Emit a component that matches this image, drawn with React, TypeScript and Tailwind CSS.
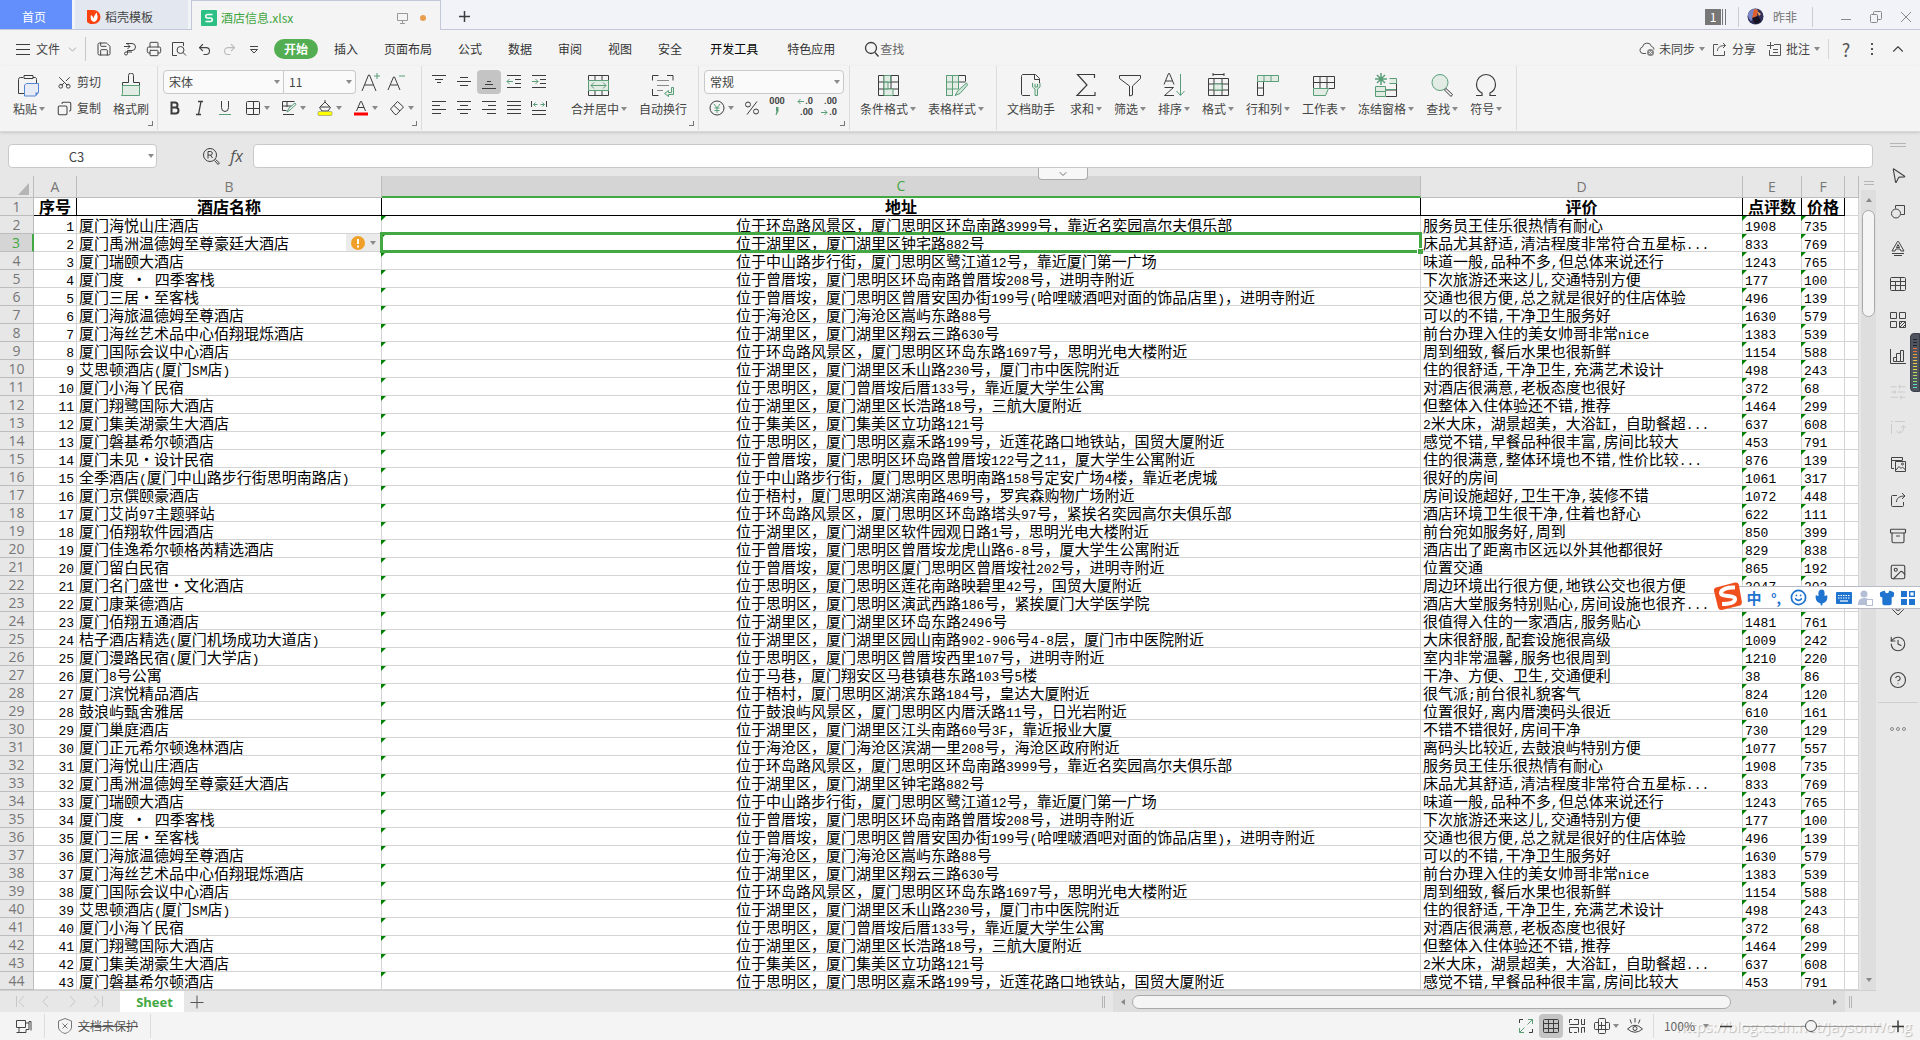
import React from 'react';
import {
  Archive,
  ChevronDown,
  ChevronUp,
  CircleHelp,
  Copy,
  History,
  Image,
  Mic,
  MousePointer2,
  Printer,
  Redo2,
  Save,
  Scissors,
  Shirt,
  SlidersHorizontal,
  Smile,
  Undo2,
} from 'lucide-react';

type Hotel = [name: string, address: string, review: string, count: string, price: string];

const hotels: Hotel[] = [
  ['厦门海悦山庄酒店', '位于环岛路风景区，厦门思明区环岛南路3999号，靠近名奕园高尔夫俱乐部', '服务员王佳乐很热情有耐心', '1908', '735'],
  ['厦门禹洲温德姆至尊豪廷大酒店', '位于湖里区，厦门湖里区钟宅路882号', '床品尤其舒适,清洁程度非常符合五星标...', '833', '769'],
  ['厦门瑞颐大酒店', '位于中山路步行街，厦门思明区鹭江道12号，靠近厦门第一广场', '味道一般,品种不多,但总体来说还行', '1243', '765'],
  ['厦门度 · 四季客栈', '位于曾厝垵，厦门思明区环岛南路曾厝垵208号，进明寺附近', '下次旅游还来这儿,交通特别方便', '177', '100'],
  ['厦门三居·至客栈', '位于曾厝垵，厦门思明区曾厝安国办街199号(哈哩啵酒吧对面的饰品店里)，进明寺附近', '交通也很方便,总之就是很好的住店体验', '496', '139'],
  ['厦门海旅温德姆至尊酒店', '位于海沧区，厦门海沧区嵩屿东路88号', '可以的不错,干净卫生服务好', '1630', '579'],
  ['厦门海丝艺术品中心佰翔琨烁酒店', '位于湖里区，厦门湖里区翔云三路630号', '前台办理入住的美女帅哥非常nice', '1383', '539'],
  ['厦门国际会议中心酒店', '位于环岛路风景区，厦门思明区环岛东路1697号，思明光电大楼附近', '周到细致,餐后水果也很新鲜', '1154', '588'],
  ['艾思顿酒店(厦门SM店)', '位于湖里区，厦门湖里区禾山路230号，厦门市中医院附近', '住的很舒适,干净卫生,充满艺术设计', '498', '243'],
  ['厦门小海丫民宿', '位于思明区，厦门曾厝垵后厝133号，靠近厦大学生公寓', '对酒店很满意,老板态度也很好', '372', '68'],
  ['厦门翔鹭国际大酒店', '位于湖里区，厦门湖里区长浩路18号，三航大厦附近', '但整体入住体验还不错,推荐', '1464', '299'],
  ['厦门集美湖豪生大酒店', '位于集美区，厦门集美区立功路121号', '2米大床，湖景超美，大浴缸，自助餐超...', '637', '608'],
  ['厦门磐基希尔顿酒店', '位于思明区，厦门思明区嘉禾路199号，近莲花路口地铁站，国贸大厦附近', '感觉不错,早餐品种很丰富,房间比较大', '453', '791'],
  ['厦门未见·设计民宿', '位于曾厝垵，厦门思明区环岛路曾厝垵122号之11，厦大学生公寓附近', '住的很满意,整体环境也不错,性价比较...', '876', '139'],
  ['全季酒店(厦门中山路步行街思明南路店)', '位于中山路步行街，厦门思明区思明南路158号定安广场4楼，靠近老虎城', '很好的房间', '1061', '317'],
  ['厦门京僎颐豪酒店', '位于梧村，厦门思明区湖滨南路469号，罗宾森购物广场附近', '房间设施超好,卫生干净,装修不错', '1072', '448'],
  ['厦门艾尚97主题驿站', '位于环岛路风景区，厦门思明区环岛路塔头97号，紧挨名奕园高尔夫俱乐部', '酒店环境卫生很干净,住着也舒心', '622', '111'],
  ['厦门佰翔软件园酒店', '位于湖里区，厦门湖里区软件园观日路1号，思明光电大楼附近', '前台宛如服务好,周到', '850', '399'],
  ['厦门佳逸希尔顿格芮精选酒店', '位于曾厝垵，厦门思明区曾厝垵龙虎山路6-8号，厦大学生公寓附近', '酒店出了距离市区远以外其他都很好', '829', '838'],
  ['厦门留白民宿', '位于曾厝垵，厦门思明区厦门思明区曾厝垵社202号，进明寺附近', '位置交通', '865', '192'],
  ['厦门名门盛世·文化酒店', '位于思明区，厦门思明区莲花南路映碧里42号，国贸大厦附近', '周边环境出行很方便,地铁公交也很方便', '3047', '203'],
  ['厦门康莱德酒店', '位于思明区，厦门思明区演武西路186号，紧挨厦门大学医学院', '酒店大堂服务特别贴心,房间设施也很齐...', '3106', '1083'],
  ['厦门佰翔五通酒店', '位于湖里区，厦门湖里区环岛东路2496号', '很值得入住的一家酒店,服务贴心', '1481', '761'],
  ['桔子酒店精选(厦门机场成功大道店)', '位于湖里区，厦门湖里区园山南路902-906号4-8层，厦门市中医院附近', '大床很舒服,配套设施很高级', '1009', '242'],
  ['厦门漫路民宿(厦门大学店)', '位于思明区，厦门思明区曾厝垵西里107号，进明寺附近', '室内非常温馨,服务也很周到', '1210', '220'],
  ['厦门8号公寓', '位于马巷，厦门翔安区马巷镇巷东路103号5楼', '干净、方便、卫生,交通便利', '38', '86'],
  ['厦门滨悦精品酒店', '位于梧村，厦门思明区湖滨东路184号，皇达大厦附近', '很气派;前台很礼貌客气', '824', '120'],
  ['鼓浪屿甄舍雅居', '位于鼓浪屿风景区，厦门思明区内厝沃路11号，日光岩附近', '位置很好,离内厝澳码头很近', '610', '161'],
  ['厦门巢庭酒店', '位于湖里区，厦门湖里区江头南路60号3F，靠近报业大厦', '不错不错很好,房间干净', '730', '129'],
  ['厦门正元希尔顿逸林酒店', '位于海沧区，厦门海沧区滨湖一里208号，海沧区政府附近', '离码头比较近,去鼓浪屿特别方便', '1077', '557'],
];

// the crawler wrote the list twice, the second pass is cut at the window edge
const rows = Array.from({ length: 43 }, (_, i) => hotels[i % hotels.length]);

// half width characters are set in a mono face, full width ones in the CJK face
function Mixed({ text }: { text: string }) {
  return (
    <>
      {text.split(/([\x20-\x7e]+|·)/).map((part, i) => {
        if (part === '·') return <span key={i} className="inline-block w-[15px] text-center">·</span>;
        if (i % 2 === 1) return <span key={i} className="font-['Liberation_Mono',monospace] text-[13px]">{part}</span>;
        return part;
      })}
    </>
  );
}

function Caret() {
  return <span className="h-0 w-0 shrink-0 border-x-[3px] border-t-4 border-x-transparent border-t-[#8a8a8a]" />;
}

function Svg({ size = 16, children }: { size?: number; children: React.ReactNode }) {
  return (
    <svg width={size} height={size} viewBox={`0 0 ${size} ${size}`} fill="none" stroke="#3c3c3c" aria-hidden="true">
      {children}
    </svg>
  );
}

const GREEN = '#5a9e78';
const PALE = '#e3ebe5';

function BigButton({ label, caret, children }: { label: string; caret?: boolean; children: React.ReactNode }) {
  return (
    <button className="flex shrink-0 flex-col items-center pt-[7px]">
      <Svg size={24}>{children}</Svg>
      <span className="flex h-6 items-center gap-[2px] whitespace-nowrap">
        {label}
        {caret && <Caret />}
      </span>
    </button>
  );
}

function Tool({ label, active, children }: { label: string; active?: boolean; children: React.ReactNode }) {
  return (
    <button
      aria-label={label}
      className={active ? 'flex h-6 w-6 items-center justify-center rounded bg-[#c4c4c4]' : 'flex h-6 w-6 items-center justify-center'}
    >
      {children}
    </button>
  );
}

function DropTool({ label, children }: { label: string; children: React.ReactNode }) {
  return (
    <button aria-label={label} className="flex h-6 items-center gap-[3px]">
      {children}
      <Caret />
    </button>
  );
}

function Group({ className, corner, children }: { className: string; corner?: boolean; children: React.ReactNode }) {
  return (
    <div className={`relative flex h-16 shrink-0 border-r border-[#dcdcdc] ${className}`}>
      {children}
      {corner && <span className="absolute right-1 bottom-1 h-[5px] w-[5px] border-r border-b border-[#777]" />}
    </div>
  );
}

function Picker({ label, options, className }: { label: string; options: string[]; className: string }) {
  return (
    <div className={`relative h-6 border-[#c9c9c9] bg-[#fafafa] ${className}`}>
      <select aria-label={label} className="h-full w-full appearance-none bg-transparent pl-[5px] outline-none">
        {options.map((o) => (
          <option key={o}>{o}</option>
        ))}
      </select>
      <span className="pointer-events-none absolute inset-y-0 right-[3px] flex items-center">
        <Caret />
      </span>
    </div>
  );
}

function TitleBar() {
  return (
    <div className="flex h-[30px] shrink-0 bg-[#f1f3f8]">
      <button className="w-[72px] border-b border-[#c3c8d8] bg-[#628ffc] pt-1 pr-1 text-white">首页</button>
      <div className="w-[3px] border-b border-[#c3c8d8]" />
      <button className="flex w-[113px] items-center gap-1 border-b border-[#c3c8d8] bg-[#e3e7f0] pt-1 pl-3">
        <svg width="14" height="16" viewBox="0 0 14 16" aria-hidden="true">
          <path d="M0 1h6.500a7 7 0 0 1 0 14H3L0 13z" fill="#fb4310" />
          <path d="M7 13C4 12 3 9 4 6c1.500 1 2.200 2 2.500 3.500C7 7 8 5 10 3.500 9.500 5 11 6.500 10.500 9 10 11.500 8.500 12.500 7 13z" fill="#fff" />
        </svg>
        稻壳模板
      </button>
      <div className="w-[3px] border-b border-[#c3c8d8]" />
      <div className="flex w-[250px] items-center gap-1 border-x border-t border-[#c3c8d8] bg-[#f4f4f4] pt-1 pr-[14px] pl-[9px]">
        <svg width="16" height="16" viewBox="0 0 16 16" fill="none" aria-hidden="true">
          <rect width="16" height="16" rx="1" fill="#2cc084" />
          <path d="M11.500 4.500h-5a1.500 1.500 0 0 0 0 3.500h3a1.700 1.700 0 0 1 0 3.500h-5" stroke="#fff" strokeWidth="1.500" />
        </svg>
        <span className="flex-1 text-[#3ea53e]">酒店信息.xlsx</span>
        <svg width="11" height="12" viewBox="0 0 11 12" fill="none" stroke="#999" aria-hidden="true">
          <path d="M.5 1.500h10v7H.5zM5.500 8.500v3M3 11.500h5" />
        </svg>
        <span className="ml-2 h-[6px] w-[6px] rounded-full bg-[#e8a050]" />
      </div>
      <div className="flex flex-1 items-center border-b border-[#c3c8d8] pt-1 pl-[17px]">
        <button aria-label="新建标签">
          <Svg size={13}>
            <path d="M6.500 1v11M1 6.500h11" strokeWidth="1.500" />
          </Svg>
        </button>
        <div className="ml-auto flex items-center pr-2 text-[#777]">
          <span className="flex h-4 w-4 items-center justify-center bg-[#777] text-white">1</span>
          <span className="mr-3 ml-[1px] h-4 w-1 border-x border-[#777]" />
          <span className="mr-2 h-5 w-px bg-[#ccc]" />
          <svg width="17" height="17" viewBox="0 0 17 17" className="mr-[9px]" aria-hidden="true">
            <circle cx="8.500" cy="8.500" r="8" fill="#30305a" />
            <path d="M1 6a8 8 0 0 1 9-5L9 8 4 13a8 8 0 0 1-3-7z" fill="#7a88c8" />
            <path d="M7 1l4 1-1 6-5 3z" fill="#e0602c" />
            <path d="M5 10l6-2 3 5a8 8 0 0 1-6 3z" fill="#171324" />
            <path d="M10 3l4 3-2 2z" fill="#f0a860" />
          </svg>
          昨非
          <span className="mx-[15px] h-5 w-px bg-[#ccc]" />
          <button aria-label="最小化" className="ml-3">
            <svg width="12" height="12" viewBox="0 0 12 12" fill="none" stroke="#888"><path d="M1 8.500h10" /></svg>
          </button>
          <button aria-label="还原" className="ml-[18px]">
            <svg width="12" height="12" viewBox="0 0 12 12" fill="none" stroke="#888">
              <rect x="0.500" y="3.500" width="7" height="8" rx="1" /><path d="M3.500 3V1.500a1 1 0 0 1 1-1h6a1 1 0 0 1 1 1v6a1 1 0 0 1-1 1H8" />
            </svg>
          </button>
          <button aria-label="关闭" className="ml-[18px]">
            <svg width="12" height="12" viewBox="0 0 12 12" fill="none" stroke="#888"><path d="M1 1l10 10M11 1L1 11" /></svg>
          </button>
        </div>
      </div>
    </div>
  );
}

function MenuBar() {
  return (
    <div className="flex h-9 shrink-0 items-center whitespace-nowrap pt-[2px]">
      <button className="flex items-center gap-[6px] pl-4">
        <Svg size={14}><path d="M0 2.500h14M0 7.500h14M0 12.500h14" /></Svg>
        文件
        <ChevronDown size={13} strokeWidth={1.5} color="#999" />
      </button>
      <span className="mx-[6px] h-6 w-px bg-[#c8c8c8]" />
      <div className="flex gap-px text-[#444]">
        <Tool label="保存"><Save size={16} strokeWidth={1.5} /></Tool>
        <Tool label="输出">
          <Svg><path d="M3 5.500h6M6.500 3l2.500 2.500L6.500 8M5 2.500h6a3.200 3.200 0 0 1 0 7H6.500v3a1.500 1.500 0 1 1-1.500-1.500h6" stroke="#444" /></Svg>
        </Tool>
        <Tool label="打印"><Printer size={16} strokeWidth={1.5} /></Tool>
        <Tool label="打印预览">
          <Svg><path d="M6 14.500H1.500v-13h11V5" stroke="#444" /><circle cx="9.500" cy="9" r="3.500" stroke="#444" /><path d="M12 11.500l3 3" stroke="#444" /></Svg>
        </Tool>
        <Tool label="撤销"><Undo2 size={15} strokeWidth={1.7} /></Tool>
        <Tool label="恢复"><Redo2 size={15} strokeWidth={1.7} color="#bbb" /></Tool>
        <Tool label="更多">
          <Svg size={10}><path d="M1 2.500h8M1.500 5.500h7L5 9z" stroke="#444" /></Svg>
        </Tool>
      </div>
      <nav className="ml-2 flex items-center gap-[26px] text-[#333]">
        <button className="-mr-[10px] h-5 w-11 rounded-full bg-[#53ad53] font-bold text-white">开始</button>
        {['插入', '页面布局', '公式', '数据', '审阅', '视图', '安全'].map((t) => (
          <button key={t}>{t}</button>
        ))}
      </nav>
      <nav className="flex items-center gap-[29px] pl-7 text-[#333]">
        <button className="text-black">开发工具</button>
        <button>特色应用</button>
        <button className="flex items-center text-[#666]">
          <Svg><circle cx="7" cy="7" r="5.500" strokeWidth="1.300" /><path d="M11 11.500l3.500 4" strokeWidth="1.300" /></Svg>
          查找
        </button>
      </nav>
      <div className="ml-auto flex items-center pr-[13px]">
        <button className="flex items-center gap-1">
          <Svg>
            <path d="M7 12.500H4a3.300 3.300 0 0 1-.5-6.500 4.600 4.600 0 0 1 9-.5 3 3 0 0 1 2.500 3" stroke="#555" />
            <circle cx="11.500" cy="11.500" r="3.500" fill="#888" stroke="none" />
            <path d="M10.200 10.200l2.600 2.600M12.800 10.200l-2.600 2.600" stroke="#fff" />
          </Svg>
          未同步 <Caret />
        </button>
        <button className="ml-[7px] flex items-center gap-[5px]">
          <Svg size={15}><path d="M6 2.500H1.500v11h11V9M5.500 9c0-4 3-5.500 8-5.500M11 1l2.500 2.500L11 6" stroke="#555" /></Svg>
          分享
        </button>
        <button className="ml-[11px] flex items-center gap-1">
          <Svg size={15}><path d="M7 2.500h6.500v11h-11V8M3.500 0v7M0 3.500h7M6 7.500h5M6 10.500h5" stroke="#555" /></Svg>
          批注 <Caret />
        </button>
        <span className="mx-2 h-5 w-px bg-[#d5d5d5]" />
        <button aria-label="帮助" className="w-[18px] text-lg leading-5 text-[#555]">?</button>
        <button aria-label="更多选项" className="ml-[11px] flex w-3 flex-col items-center gap-[3px]">
          {[0, 1, 2].map((n) => <span key={n} className="h-[2px] w-[2px] bg-[#555]" />)}
        </button>
        <button aria-label="折叠功能区" className="ml-[11px]"><ChevronUp size={18} strokeWidth={1.5} /></button>
      </div>
    </div>
  );
}

function AlignIcon({ d }: { d: string }) {
  return <Svg><path d={d} /></Svg>;
}

function Ribbon() {
  return (
    <div className="relative z-10 flex h-[66px] shrink-0 items-start overflow-hidden border-b border-[#d8d8d8] bg-[#f4f4f4] shadow-sm">
      <Group className="w-[158px] gap-3 pl-[13px]" corner>
        <BigButton label="粘贴" caret>
          <path d="M6 4.500H3.500a2 2 0 0 0-2 2v14h6M16 4.500h2.500a2 2 0 0 1 1 2V10M7 2.500h9v3H7z" />
          <path d="M9.500 10.500h12v9l-3 3.500h-11V12z" stroke="#5584d0" fill="#e6ebf5" />
          <path d="M18.500 23v-3.500H22z" fill="#5584d0" stroke="none" />
        </BigButton>
        <div className="flex flex-col gap-[2px] pt-1">
          <button className="flex h-6 items-center gap-[5px]"><Scissors size={15} strokeWidth={1.6} className="-rotate-90" />剪切</button>
          <button className="flex h-6 items-center gap-[5px]"><Copy size={15} strokeWidth={1.7} className="-scale-x-100" />复制</button>
        </div>
        <BigButton label="格式刷">
          <path d="M3.500 13V9.500h6v-7a2 2 0 0 1 5 0v7h6V13" />
          <path d="M3.500 12.500h17v10H2.500l1-2z" stroke={GREEN} fill={PALE} />
        </BigButton>
      </Group>

      <Group className="w-[264px] pl-[5px]" corner>
        <div className="flex flex-col gap-[2px] pt-1">
          <div className="flex">
            <Picker label="字体" options={['宋体', '黑体']} className="w-[121px] rounded-l border" />
            <Picker label="字号" options={['11', '12', '14']} className="w-[72px] rounded-r border-y border-r" />
            <button aria-label="增大字号" className="ml-1 w-6">
              <Svg size={20}><path d="M2 19L8.500 3h1L16 19M4.500 13h9" /><path d="M17 1v6M14 4h6" stroke={GREEN} /></Svg>
            </button>
            <button aria-label="减小字号" className="ml-[2px] w-6">
              <Svg size={20}><path d="M2 18L7.500 5h1L14 18M4.500 13h7" /><path d="M13 4h6" stroke={GREEN} /></Svg>
            </button>
          </div>
          <div className="flex gap-px">
            <Tool label="加粗"><Svg><path d="M4.500 2.500v11h4a3 3 0 0 0 0-6h-4 3.500a2.500 2.500 0 0 0 0-5z" strokeWidth="2" /></Svg></Tool>
            <Tool label="倾斜"><Svg><path d="M6 1.500h5M4 14.500h5M9 1.500L6.500 14.500" strokeWidth="1.300" /></Svg></Tool>
            <Tool label="下划线"><Svg><path d="M4.500 1v6.500a3.500 4 0 0 0 7 0V1" /><path d="M2 14.500h12" stroke={GREEN} /></Svg></Tool>
            <div className="ml-[7px] flex gap-[11px]">
              <DropTool label="边框"><Svg><rect x="1.500" y="1.500" width="13" height="13" rx="1" /><path d="M8.500 1.500v13M1.500 8.500h13" /></Svg></DropTool>
              <DropTool label="绘制边框">
                <Svg><path d="M13.500 1.500h-12v9h4M1.500 6h9M6 1.500V7M2 14.500h11" /><path d="M6 12l2-4 6-5 1 1.500-6 5.500z" stroke={GREEN} /></Svg>
              </DropTool>
              <DropTool label="填充颜色">
                <Svg><path d="M2.500 7.500L8 2l5.500 5.500L11 11H5zM8 2V0M3 7h10" /><rect x="1" y="11.500" width="14" height="4" rx="1" fill="#ff0" stroke="#777" strokeWidth="0.500" /></Svg>
              </DropTool>
              <DropTool label="字体颜色">
                <Svg><path d="M3.500 11L7.500 1.500h1l4 9.500M5 7.500h6" /><path d="M1 14h14" stroke="#f00" strokeWidth="3" /></Svg>
              </DropTool>
              <DropTool label="清除格式">
                <Svg><path d="M1.500 9l7-7.500 6 5.500-7 7.500H6zM5 5.500l6 5.500" /></Svg>
              </DropTool>
            </div>
          </div>
        </div>
      </Group>

      <Group className="w-[277px] pl-[5px]" corner>
        <div className="flex flex-col gap-[2px] pt-1">
          <div className="flex gap-px">
            <Tool label="顶端对齐"><AlignIcon d="M1 1.500h14M4 5.500h8M6 8.500h4" /></Tool>
            <Tool label="垂直居中"><AlignIcon d="M4 3.500h8M1 7.500h14M4 11.500h8" /></Tool>
            <Tool label="底端对齐" active><AlignIcon d="M6 7.500h4M4 10.500h8M1 14.500h14" /></Tool>
            <Tool label="减少缩进">
              <Svg><path d="M1 1.500h14M9 5.500h6M9 9.500h6M1 13.500h14" /><path d="M7 7.500H1M3.500 5L1 7.500 3.500 10" stroke={GREEN} /></Svg>
            </Tool>
            <Tool label="增加缩进">
              <Svg><path d="M1 1.500h14M9 5.500h6M9 9.500h6M1 13.500h14" /><path d="M1 7.500h6M4.500 5L7 7.500 4.500 10" stroke={GREEN} /></Svg>
            </Tool>
          </div>
          <div className="flex gap-px">
            <Tool label="左对齐"><AlignIcon d="M1 1.500h14M1 5.500h8M1 9.500h14M1 13.500h9" /></Tool>
            <Tool label="水平居中"><AlignIcon d="M1 1.500h14M4 5.500h8M1 9.500h14M4 13.500h8" /></Tool>
            <Tool label="右对齐"><AlignIcon d="M1 1.500h14M7 5.500h8M1 9.500h14M6 13.500h9" /></Tool>
            <Tool label="两端对齐"><AlignIcon d="M1 1.500h14M1 5.500h14M1 9.500h14M1 13.500h14" /></Tool>
            <Tool label="分散对齐">
              <Svg><path d="M1 10.500h14M1 14.500h14M.5 1v6M15.500 1v6" /><path d="M2.500 4.500h4M4.500 2.500l-2 2 2 2M13.500 4.500h-4M11.500 2.500l2 2-2 2" stroke={GREEN} /></Svg>
            </Tool>
          </div>
        </div>
        <div className="flex gap-3 pl-5">
          <BigButton label="合并居中" caret>
            <path d="M1.500 7.500v-5h20v5M1.500 17.500v5h20v-5M8 2.500v5M15 2.500v5M8 17.500v5M15 17.500v5" />
            <path d="M1.500 7.500h20v10h-20z" stroke={GREEN} fill={PALE} />
            <path d="M4 12.500h15M7 9.500l-3 3 3 3M16 9.500l3 3-3 3" stroke={GREEN} />
          </BigButton>
          <BigButton label="自动换行">
            <path d="M1.500 7.500v-5h6M16 2.500h6v5M1.500 16v6.500h6" />
            <path d="M6 7.500h12M6 12.500h12M6 17.500h6" stroke="#888" />
            <path d="M20.500 14.500h2v7h-5v2l-4-3 4-3v2h3z" stroke={GREEN} fill={PALE} />
          </BigButton>
        </div>
      </Group>

      <Group className="w-[151px] pl-[5px]" corner>
        <div className="flex flex-col gap-[2px] pt-1">
          <Picker label="数字格式" options={['常规', '数值', '货币']} className="w-[140px] rounded border" />
          <div className="flex items-center pl-[5px]">
            <DropTool label="货币格式">
              <Svg><circle cx="8" cy="8" r="7" /><path d="M5 4l3 4 3-4M8 8v5M5.500 8h5M5.500 10.500h5" stroke={GREEN} /></Svg>
            </DropTool>
            <div className="ml-[6px] flex gap-px">
              <Tool label="百分比"><Svg><circle cx="4" cy="4.500" r="2.500" /><circle cx="12" cy="11.500" r="2.500" /><path d="M13 1.500L3 14.500" /></Svg></Tool>
              <button aria-label="千位分隔" className="flex h-6 w-6 flex-col items-center font-['Roboto',sans-serif] text-[9px] leading-[11px] font-bold">
                <span>000</span>
                <svg width="4" height="8" viewBox="0 0 4 8" fill={GREEN}><path d="M1 0h2.500v4L1.500 8H.5L1.500 4H1z" /></svg>
              </button>
            </div>
            <div className="ml-[4px] flex font-['Roboto',sans-serif] text-[9px] leading-[11px] font-bold">
              <button className="flex h-6 w-6 flex-col items-end pr-1">
                <span className="flex items-center gap-px">
                  <svg width="7" height="7" viewBox="0 0 7 7" fill="none" stroke={GREEN}><path d="M7 3.500H1M3.500 1L1 3.500 3.500 6" /></svg>.0
                </span>
                <span>.00</span>
              </button>
              <button className="flex h-6 w-6 flex-col items-end pr-1">
                <span>.00</span>
                <span className="flex items-center gap-px">
                  <svg width="7" height="7" viewBox="0 0 7 7" fill="none" stroke={GREEN}><path d="M0 3.500h6M3.500 1L6 3.500 3.500 6" /></svg>.0
                </span>
              </button>
            </div>
          </div>
        </div>
      </Group>

      <Group className="w-[147px] gap-3 pl-[10px]">
        <BigButton label="条件格式" caret>
          <path d="M2.500 2.500h20v20h-20zM2.500 9h20M2.500 16h20M8 2.500v20M15 2.500v20" />
          <path d="M8 2.500h6.500V9H8zM8 16h9v6.500H8zM8 9h4v7H8z" stroke={GREEN} fill={PALE} />
        </BigButton>
        <BigButton label="表格样式" caret>
          <path d="M2.500 2.500h19v6M2.500 9v13.500h6M2.500 9h19" />
          <path d="M2.500 2.500h12V16h-12zM8.500 2.500V16M2.500 9h12M2.500 16v6.500h6V16" stroke={GREEN} fill={PALE} />
          <path d="M11 22.500l3-5 8.500-7.500 1 2-7.500 8.500z" stroke={GREEN} fill="#d3e6da" />
        </BigButton>
      </Group>

      <Group className="w-[520px] pl-[10px]">
        <BigButton label="文档助手">
          <path d="M20.500 11V5.500l-4-4h-13a2 2 0 0 0-1 2v18a2 2 0 0 0 1 1H11M15.500 2v4.500h5" />
          <path d="M13.500 10v4l2.500 2v6.500h2.500V16l2.500-2v-4M16 11v3h2.500v-3" stroke={GREEN} fill={PALE} />
        </BigButton>
        <div className="flex gap-3 pl-[15px]">
          <BigButton label="求和" caret>
            <path d="M20.500 5V1.500h-17L13 12l-10 10.500h18V19" strokeWidth="1.200" />
          </BigButton>
          <BigButton label="筛选" caret>
            <path d="M1.500 2.500h21v3L14.500 13v9l-3 1v-10L1.500 5.500z" />
          </BigButton>
          <BigButton label="排序" caret>
            <path d="M2 11.500L6.500.5h1L12 11.500M3.500 8h7M2.500 14.500h9l-9 8h9.500" />
            <path d="M18.500 1v21M14.500 18l4 4.500 4-4.500" stroke={GREEN} />
          </BigButton>
          <BigButton label="格式" caret>
            <path d="M2.500 5.500h20v17h-20zM2.500 11h20M2.500 17h20M8 5.500v17M16 5.500v17M7 1.500h11M7 0v3M18 0v3" />
            <path d="M8 11h8v6H8z" stroke={GREEN} fill={PALE} />
          </BigButton>
          <BigButton label="行和列" caret>
            <path d="M1.500 8.500v14h6v-14M1.500 15h6" />
            <path d="M1.500 2.500h21v6h-21zM8 2.500v6M15 2.500v6" stroke={GREEN} fill={PALE} />
          </BigButton>
          <BigButton label="工作表" caret>
            <path d="M1.500 15V3.500h21v12H17M1.500 9.500h21M8 3.500v12M15 3.500v12" />
            <path d="M1.500 15.500h15l-3 7h-12z" stroke={GREEN} fill={PALE} />
          </BigButton>
          <BigButton label="冻结窗格" caret>
            <path d="M12 23.500h10.500v-14M12 17h10" />
            <path d="M1.500 13.500h10v10h-10zM1.500 18.500h10M15.500 5.500h7v5h-7M12 16.500h10" stroke={GREEN} fill={PALE} />
            <path d="M7 0v12M1 6h12M3 2l8 8M11 2l-8 8" stroke={GREEN} strokeWidth="1.500" />
          </BigButton>
          <BigButton label="查找" caret>
            <circle cx="10" cy="9.500" r="8" stroke={GREEN} fill={PALE} />
            <path d="M14.500 17l1.500-1.500 6.500 6-1.500 2z" />
          </BigButton>
          <BigButton label="符号" caret>
            <path d="M2 22.500h6V20C4 18 2.500 14.500 2.500 11.500a9.500 10 0 0 1 19 0c0 3-1.500 6.500-5.500 8.500v2.500h6" strokeWidth="1.200" />
          </BigButton>
        </div>
      </Group>
    </div>
  );
}

function FormulaBar() {
  return (
    <div className="relative flex h-11 shrink-0 items-center pt-1 pr-[3px] pl-2">
      <div className="relative flex w-[149px]">
        <input aria-label="名称框" defaultValue="C3" className="h-6 w-full rounded border border-[#c9c9c9] bg-white pr-3 text-center text-[13px] outline-none" />
        <span className="absolute inset-y-0 right-[3px] flex items-center"><Caret /></span>
      </div>
      <div className="flex w-24 items-center justify-end gap-[10px] pr-[10px] text-[#555]">
        <button aria-label="定位">
          <Svg size={18}>
            <circle cx="8" cy="8" r="6.500" />
            <path d="M6 11.500V4.500h2.500a1.800 1.800 0 0 1 0 3.600H6M8.500 8l2 3M12.500 13.500l3.500 4 1.500-1.500-4-3.500" />
          </Svg>
        </button>
        <button className="font-['Open_Sans',sans-serif] text-base leading-5 italic">fx</button>
      </div>
      <input aria-label="编辑栏" className="h-6 flex-1 rounded border border-[#c9c9c9] bg-white px-2 outline-none" />
      <button aria-label="展开编辑栏" className="absolute top-9 left-[1038px] z-20 flex h-3 w-[50px] items-center justify-center rounded-b border-x border-b border-[#aaa] bg-[#f7f7f7]">
        <ChevronDown size={12} strokeWidth={1.5} />
      </button>
    </div>
  );
}

const flag = <span className="absolute top-0 -left-px h-0 w-0 border-t-[5px] border-r-[5px] border-t-[#008000] border-r-transparent" />;
const cell = 'relative h-[18px] border-r border-b border-[#d4d4d4] p-0';
const text = 'h-[17px] leading-[17px] whitespace-pre';
const rowHead = "h-[18px] border-r border-b border-[#bdbdbd] p-0 font-['Open_Sans','Noto_Sans',sans-serif] text-sm leading-[17px] font-normal";

function Sheet() {
  return (
    <div className="min-w-0 flex-1 bg-white">
      <table className="w-full table-fixed border-separate border-spacing-0 text-[15px] text-black">
        <colgroup>
          <col className="w-[34px]" />
          <col className="w-[43px]" />
          <col className="w-[305px]" />
          <col />
          <col className="w-[322px]" />
          <col className="w-[59px]" />
          <col className="w-[43px]" />
          <col className="w-[14px]" />
        </colgroup>
        <thead className="font-['Open_Sans','Noto_Sans',sans-serif] text-sm leading-5 text-[#777]">
          <tr>
            <th className="h-[22px] border-r border-b border-[#bdbdbd] bg-[#e7e7e7] p-0">
              <svg width="33" height="20" aria-hidden="true"><path d="M29 6v12H18z" fill="#b5b5b5" /></svg>
            </th>
            {['A', 'B', 'C', 'D', 'E', 'F', ''].map((c) => (
              <th
                key={c}
                scope="col"
                className={
                  c === 'C'
                    ? 'h-[22px] border-r border-b-2 border-r-[#bdbdbd] border-b-[#43a843] bg-[#d5d5d5] p-0 font-normal text-[#43a843]'
                    : 'h-[22px] border-r border-b border-[#bdbdbd] bg-[#e7e7e7] p-0 font-normal'
                }
              >
                {c}
              </th>
            ))}
          </tr>
        </thead>
        <tbody>
          <tr>
            <th className={`${rowHead} bg-[#e7e7e7] text-[#777]`}>1</th>
            {['序号', '酒店名称', '地址', '评价', '点评数', '价格'].map((h) => (
              <th key={h} className="h-[18px] border-r border-b border-black p-0 text-base">
                <div className={text}>{h}</div>
              </th>
            ))}
            <td className={cell} />
          </tr>
          {rows.map(([name, address, review, count, price], i) => {
            const selected = i === 1;
            return (
              <tr key={i}>
                <th className={selected ? `${rowHead} border-r-2 border-r-[#43a843] bg-[#d5d5d5] text-[#43a843]` : `${rowHead} bg-[#e7e7e7] text-[#777]`}>
                  {i + 2}
                </th>
                <td className={cell}>
                  <div className={`${text} pr-[2px] text-right`}><Mixed text={String(i + 1)} /></div>
                </td>
                <td className={cell}>
                  <div className={`${text} pl-[2px]`}><Mixed text={name} /></div>
                  {selected && (
                    <span className="absolute top-0 right-0 flex h-[17px] w-[35px] items-center justify-center gap-[5px] bg-[#ebebeb]">
                      <svg width="14" height="14" viewBox="0 0 14 14" aria-hidden="true">
                        <circle cx="7" cy="7" r="7" fill="#f0a028" />
                        <path d="M7 3v5M7 9.500v2" stroke="#fff" strokeWidth="2" />
                      </svg>
                      <Caret />
                    </span>
                  )}
                </td>
                <td className={cell}>
                  {flag}
                  <div className={`${text} pl-[354px]`}><Mixed text={address} /></div>
                  {selected && (
                    <span className="absolute -inset-[2px] z-10 border-[3px] border-[#43a843]">
                      <span className="absolute -right-1 -bottom-1 h-[6px] w-[6px] border-t border-l border-white bg-[#43a843]" />
                    </span>
                  )}
                </td>
                <td className={cell}>
                  <div className={`${text} pl-[2px]`}><Mixed text={review} /></div>
                </td>
                <td className={cell}>{flag}<div className={`${text} pl-[2px]`}><Mixed text={count} /></div></td>
                <td className={cell}>{flag}<div className={`${text} pl-[2px]`}><Mixed text={price} /></div></td>
                <td className={cell} />
              </tr>
            );
          })}
        </tbody>
      </table>
    </div>
  );
}

function VerticalScroll() {
  return (
    <div className="flex w-[17px] shrink-0 flex-col items-center pl-[2px]">
      <span className="mt-[5px] mb-[5px] h-1 w-[10px] border-y border-[#b5b5b5]" />
      <div className="flex w-full flex-1 flex-col items-center bg-[#dedede]">
        <span className="mt-2 h-0 w-0 border-x-[3px] border-b-4 border-x-transparent border-b-[#888]" />
        <span className="mt-2 h-[107px] w-[13px] rounded-full border border-[#aaa] bg-[#f5f5f5]" />
        <span className="mt-auto mb-2"><span className="block h-0 w-0 border-x-[3px] border-t-4 border-x-transparent border-t-[#888]" /></span>
      </div>
    </div>
  );
}

function SheetTabs() {
  return (
    <div className="relative flex h-[22px] shrink-0 items-center border-t border-[#cfcfcf] bg-[#e7e7e7]">
      <div className="flex w-[120px] items-center gap-[12px] pl-[13px]">
        {['M3.500 2v11M11 2L6 7.500l5 5.500', 'M9 2L4 7.500 9 13', 'M5 2l5 5.500L5 13', 'M3 2l5 5.500L3 13M11.500 2v11'].map((d, i) => (
          <button key={d} aria-label={['第一张', '上一张', '下一张', '最后一张'][i]}>
            <svg width="14" height="15" viewBox="0 0 14 15" fill="none" stroke="#c8c8c8"><path d={d} /></svg>
          </button>
        ))}
      </div>
      <button className="h-full w-16 bg-white pl-[5px] font-['Open_Sans',sans-serif] text-[13px] leading-5 font-bold text-[#43a843]">Sheet</button>
      <button aria-label="新建工作表" className="ml-[6px]"><Svg size={14}><path d="M7 .5v13M.5 7.500h13" stroke="#555" /></Svg></button>
      <span className="mr-2 ml-auto h-3 w-[3px] border-x border-[#b5b5b5]" />
      <div className="flex h-full w-[732px] items-center bg-[#dedede] pl-2">
        <span className="h-0 w-0 border-y-[3px] border-r-4 border-y-transparent border-r-[#888]" />
        <span className="ml-[7px] h-[14px] w-[599px] rounded-full border border-[#aaa] bg-[#f5f5f5]" />
        <span className="mr-2 ml-auto h-0 w-0 border-y-[3px] border-l-4 border-y-transparent border-l-[#777]" />
      </div>
      <span className="mr-6 ml-1 h-3 w-[3px] border-x border-[#b5b5b5]" />
    </div>
  );
}

function SideBar() {
  const icon = { size: 18, strokeWidth: 1.5 };
  const tools: [string, React.ReactNode][] = [
    ['选择', <MousePointer2 {...icon} className="rotate-12" />],
    ['形状', <Svg><circle cx="6" cy="9.500" r="4.500" stroke="#444" /><path d="M5.500 4.500v-3h9v9h-3.500" stroke="#444" /></Svg>],
    ['样式', <Svg><path d="M2 11L7.500 1.500h1L14 11h-3l-1-2H6l-1 2zM6.500 7.500L8 4.500l1.500 3zM2 13.500h12M4 15.500h8" stroke="#444" /></Svg>],
    ['表格', <Svg><rect x=".5" y="1.500" width="15" height="13" rx="1" stroke="#444" /><path d="M.5 5.500h15M.5 9.500h15M5.500 5.500v9M10.500 1.500v13" stroke="#444" /></Svg>],
    ['应用', <Svg><path d="M.5.5h6v6h-6zM9.500.5h6v6h-6zM.5 9.500h6v6h-6zM9.500 9.500h6v6h-6zM10 15l5-5M10 12l2-2M13 15l2-2" stroke="#444" /></Svg>],
    ['图表', <Svg><path d="M.5 1v14.500H16M3.500 9.500h3v4h-3zM6.500 5.500h4v8h-4zM10.500 2.500h3v11h-3z" stroke="#444" /></Svg>],
    ['设置', <SlidersHorizontal {...icon} color="#ccc" />],
    ['替换', <Svg><path d="M1 1.500h2M1.500 4v10M5 1.500h10M6 10.500l2.500 2.500 2.500-2.500M8.500 13c4 0 5-2 5-7M11 8l2.500-2.500L16 8" stroke="#ccc" /></Svg>],
    ['图片库', <Svg><path d="M4 12.500H1.500v-11h11V4M1.500 4.500h11M5.500 5.500h10v10h-10zM6 14l3-3.500 2 2 1.500-1.500 3 3" stroke="#444" /><circle cx="12.500" cy="8" r="1" stroke="#444" /></Svg>],
    ['分享', <Svg><path d="M7 3.500H2.500a1 1 0 0 0-1 1v9a1 1 0 0 0 1 1h10a1 1 0 0 0 1-1V10M6.500 10c0-4 3-6 8.500-6M12 1l3 3-3 3" stroke="#444" /></Svg>],
    ['归档', <Archive {...icon} />],
    ['图片', <Image {...icon} />],
    ['安全', <Svg><path d="M8 1l5.500 2.500v6L8 15 2.500 9.500v-6z" stroke="#444" /><circle cx="8" cy="8" r="2.500" stroke="#444" /></Svg>],
    ['历史', <History {...icon} />],
    ['帮助', <CircleHelp {...icon} />],
  ];
  return (
    <aside className="flex w-11 shrink-0 flex-col items-center text-[#444]">
      <span className="mt-[11px] h-1 w-4 border-y border-[#b5b5b5]" />
      <div className="mt-[11px] flex flex-col">
        {tools.map(([label, node]) => (
          <button key={label} aria-label={label} className="flex h-9 w-9 items-center justify-center">{node}</button>
        ))}
      </div>
      <span className="mt-1 h-px w-10 bg-[#cfcfcf]" />
      <button aria-label="更多" className="mt-6 flex gap-[2px]">
        {[0, 1, 2].map((n) => <span key={n} className="h-1 w-1 rounded-full border border-[#888]" />)}
      </button>
    </aside>
  );
}

function SystemMeter() {
  const bars = ['bg-[#e8703a]', 'bg-[#e8a03a]', 'bg-[#e8c84a]', 'bg-[#dcd84a]', 'bg-[#b8dc5a]', 'bg-[#8cdc70]', 'bg-[#5adcc0]'];
  return (
    <div className="absolute top-[333px] right-0 z-30 flex h-[59px] w-[10px] flex-col items-center gap-[2px] rounded-l border border-[#3a3e48] bg-[#50545f] pt-[5px]">
      {[0, 1, 2].map((n) => <span key={n} className="h-px w-1 bg-[#22252c]" />)}
      {bars.map((c) => (
        <React.Fragment key={c}>
          <span className={`h-px w-1 ${c}`} />
          <span className={`h-px w-1 ${c}`} />
        </React.Fragment>
      ))}
    </div>
  );
}

function StatusBar() {
  return (
    <footer className="relative flex h-7 shrink-0 items-center bg-[#f4f4f4]">
      <button aria-label="输入模式" className="pl-[15px]">
        <Svg size={17}><path d="M1.500 2.500h9v7h-9zM4 9.500v5H1.500M10.500 5h3.500v6.500h-3v3H4M14 5V3.500h2v9" stroke="#444" /></Svg>
      </button>
      <span className="mx-3 h-6 w-px bg-[#dcdcdc]" />
      <button className="flex items-center gap-[5px] text-[#555]">
        <Svg><path d="M8 .5L14.500 3v6c0 3-3 5.500-6.500 6.500C4.500 14.500 1.500 12 1.500 9V3zM5.500 5.500l5 5M10.500 5.500l-5 5" stroke="#777" /></Svg>
        <span className="line-through">文档未保护</span>
      </button>
      <span className="ml-3 h-6 w-px bg-[#dcdcdc]" />
      <div className="relative z-10 ml-auto flex items-center pr-4">
        <button aria-label="全屏"><Svg><path d="M1.500 5V1.500H5M14.500 11v3.500H11" /><path d="M10 1.500h4.500V6M14.500 1.500L9.500 6.500M6 14.500H1.500V10M1.500 14.500l5-5" stroke={GREEN} /></Svg></button>
        <button aria-label="普通视图" className="ml-[5px] flex h-6 w-6 items-center justify-center rounded bg-[#c4c4c4]">
          <Svg><rect x=".5" y="1.500" width="15" height="13" rx="1" /><path d="M.5 5.500h15M.5 10.500h15M5.500 1.500v13M10.500 1.500v13" /></Svg>
        </button>
        <button aria-label="分页预览" className="ml-[6px]"><Svg><path d="M.5 5V1.500H3M5 1.500h4.500v5H.5M12.500 1v5.500H16M15.500 1v5.500M.5 9.500v5H3M5 14.500h3M.5 9.500h9v5M12.500 15V9.500H16M15.500 9.500v5" stroke="#444" /></Svg></button>
        <div className="ml-[9px]">
          <DropTool label="页面布局"><Svg><rect x="4.500" y=".5" width="7" height="15" rx="1" stroke="#444" /><path d="M4.500 4.500h-3a1 1 0 0 0-1 1v5a1 1 0 0 0 1 1h13a1 1 0 0 0 1-1v-5a1 1 0 0 0-1-1h-3M4.500 7.500h7M7.500 4v8" stroke="#444" /></Svg></DropTool>
        </div>
        <button aria-label="护眼模式" className="ml-2"><Svg><path d="M.5 11Q8 3.500 15.500 11 8 17.500.5 11zM8 0v4.500M3 1.500l1.500 4M13 1.500l-1.500 4" stroke="#444" /><circle cx="8" cy="10.500" r="2" stroke="#444" /></Svg></button>
        <span className="mx-[10px] h-6 w-px bg-[#dcdcdc]" />
        <button className="flex items-center gap-2 text-xs text-[#666]">100% <Caret /></button>
        <button aria-label="缩小" className="ml-[11px]"><Svg size={12}><path d="M0 6.500h12" strokeWidth="1.500" /></Svg></button>
        <input
          type="range"
          aria-label="显示比例"
          defaultValue={49}
          className="mx-[11px] h-4 w-[138px] appearance-none bg-[linear-gradient(#999,#999)] bg-[length:100%_1px] bg-center bg-no-repeat [&::-webkit-slider-thumb]:h-3 [&::-webkit-slider-thumb]:w-3 [&::-webkit-slider-thumb]:appearance-none [&::-webkit-slider-thumb]:rounded-full [&::-webkit-slider-thumb]:border [&::-webkit-slider-thumb]:border-[#555] [&::-webkit-slider-thumb]:bg-[#f4f4f4]"
        />
        <button aria-label="放大"><Svg size={12}><path d="M0 6.500h12M6 .5v12" strokeWidth="1.500" /></Svg></button>
      </div>
      <span className="pointer-events-none absolute right-2 bottom-1 font-['Open_Sans',sans-serif] text-[15px] leading-5 text-white/80 [text-shadow:1px_1px_1px_rgba(0,0,0,0.25)]">
        https://blog.csdn.net/JaysonWong
      </span>
    </footer>
  );
}

function ImeBar() {
  return (
    <div className="absolute top-[586px] right-0 z-30 flex h-[23px] w-[192px] items-center gap-[6px] border-y border-[#b9bcc4] bg-white pr-1 pl-[18px] text-[#1f74d0]">
      <svg width="30" height="30" viewBox="0 0 30 30" className="absolute -top-[6px] -left-[15px]" aria-hidden="true">
        <path d="M3 6.500L22 1.500q3-.5 3.800 2l3 17q.5 3-2 4L9 29q-3 .5-4-2.500L1 10q-.3-3 2-3.500z" fill="#ee4f1c" />
        <path d="M22 6.500C15 6 8 8 8 12c0 4.500 14 1.500 14 6 0 4-7 5-13 5" fill="none" stroke="#fff" strokeWidth="4" />
      </svg>
      <button className="w-4 text-[15px] leading-5 font-bold">中</button>
      <button className="w-4 text-sm leading-5 font-bold">°,</button>
      <Smile size={17} strokeWidth={2.4} />
      <Mic size={17} strokeWidth={2.6} fill="currentColor" />
      <svg width="16" height="12" viewBox="0 0 16 12" aria-hidden="true">
        <rect width="16" height="12" rx="1" fill="currentColor" />
        <path d="M2 3.500h12M2 6h12" stroke="#fff" strokeWidth="1.200" strokeDasharray="1.500 1" />
        <path d="M4 9h8" stroke="#fff" strokeWidth="1.200" />
      </svg>
      <svg width="15" height="16" viewBox="0 0 15 16" aria-hidden="true">
        <circle cx="6" cy="4" r="3.500" fill="#b4bfd6" />
        <path d="M0 14q0-6 6-6 3 0 4 1v6H0z" fill="#b4bfd6" />
        <rect x="8.500" y="9.500" width="6" height="6" fill="#fff" stroke="#b4bfd6" />
      </svg>
      <Shirt size={16} fill="currentColor" />
      <svg width="14" height="14" viewBox="0 0 14 14" fill="currentColor" aria-hidden="true">
        <path d="M0 0h6v6H0zM0 8h6v6H0zM8 8h6v6H8z" />
        <rect x="8.700" y=".7" width="4.600" height="4.600" fill="none" stroke="currentColor" strokeWidth="1.400" />
      </svg>
    </div>
  );
}

export default function App() {
  return (
    <div className="relative flex h-screen flex-col overflow-hidden bg-[#f4f4f4] font-['Noto_Sans_CJK_SC',sans-serif] text-xs text-[#444]">
      <TitleBar />
      <MenuBar />
      <Ribbon />
      <div className="flex min-h-0 flex-1 bg-[#e7e7e7]">
        <main className="flex min-w-0 flex-1 flex-col">
          <FormulaBar />
          <div className="flex min-h-0 flex-1">
            <Sheet />
            <VerticalScroll />
          </div>
          <SheetTabs />
        </main>
        <SideBar />
      </div>
      <StatusBar />
      <SystemMeter />
      <ImeBar />
    </div>
  );
}
